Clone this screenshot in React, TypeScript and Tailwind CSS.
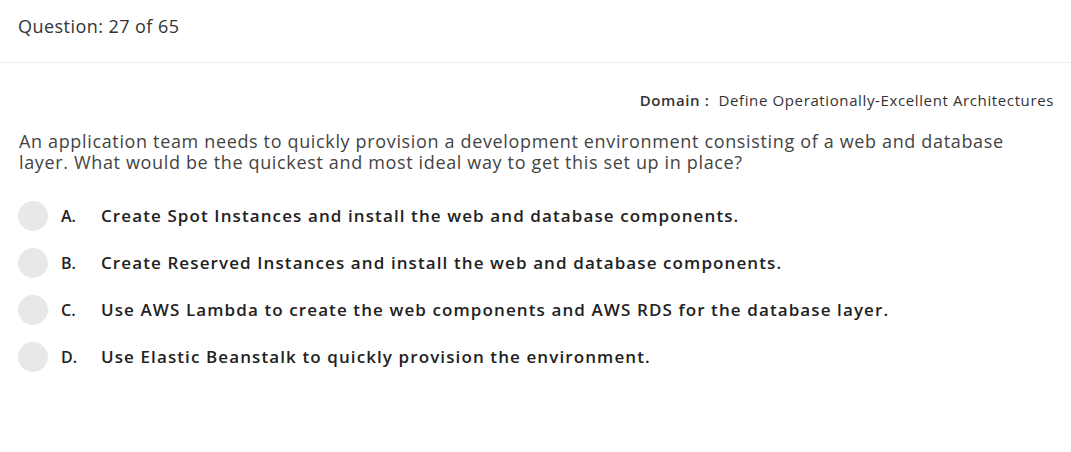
const options = [
  { letter: "A.", text: "Create Spot Instances and install the web and database components." },
  { letter: "B.", text: "Create Reserved Instances and install the web and database components." },
  { letter: "C.", text: "Use AWS Lambda to create the web components and AWS RDS for the database layer." },
  { letter: "D.", text: "Use Elastic Beanstalk to quickly provision the environment." },
];

export default function App() {
  return (
    <div className="w-[1071px] h-[452px] bg-white text-[#333333] font-['Open_Sans',sans-serif]">
      <div className="h-[63px] flex items-center px-[18px] pb-[10px] border-b border-[#efefef]">
        <span className="text-[18px] tracking-[0.45px]">Question: 27 of 65</span>
      </div>

      <div className="flex justify-end pr-[17px] pt-[26px] text-[15px] tracking-[0.62px]">
        <span className="font-semibold">Domain :</span>
        <span className="ml-[9px]">Define Operationally-Excellent Architectures</span>
      </div>

      <p className="px-[19px] mt-[19px] max-w-[1030px] text-[18px] leading-[21px] tracking-[0.65px] text-[#444]">
        An application team needs to quickly provision a development environment consisting of a web and database
        layer. What would be the quickest and most ideal way to get this set up in place?
      </p>

      <div className="flex flex-col gap-[17px] px-[18px] mt-[28px] text-[#222]">
        {options.map((o) => (
          <div key={o.letter} className="flex items-center h-[30px]">
            <div className="w-[30px] h-[30px] rounded-full bg-[#e8e8ea]" />
            <span className="ml-[13px] w-[40px] text-[16px] font-semibold">{o.letter}</span>
            <span className="text-[17px] font-semibold tracking-[1.1px]">{o.text}</span>
          </div>
        ))}
      </div>
    </div>
  );
}
